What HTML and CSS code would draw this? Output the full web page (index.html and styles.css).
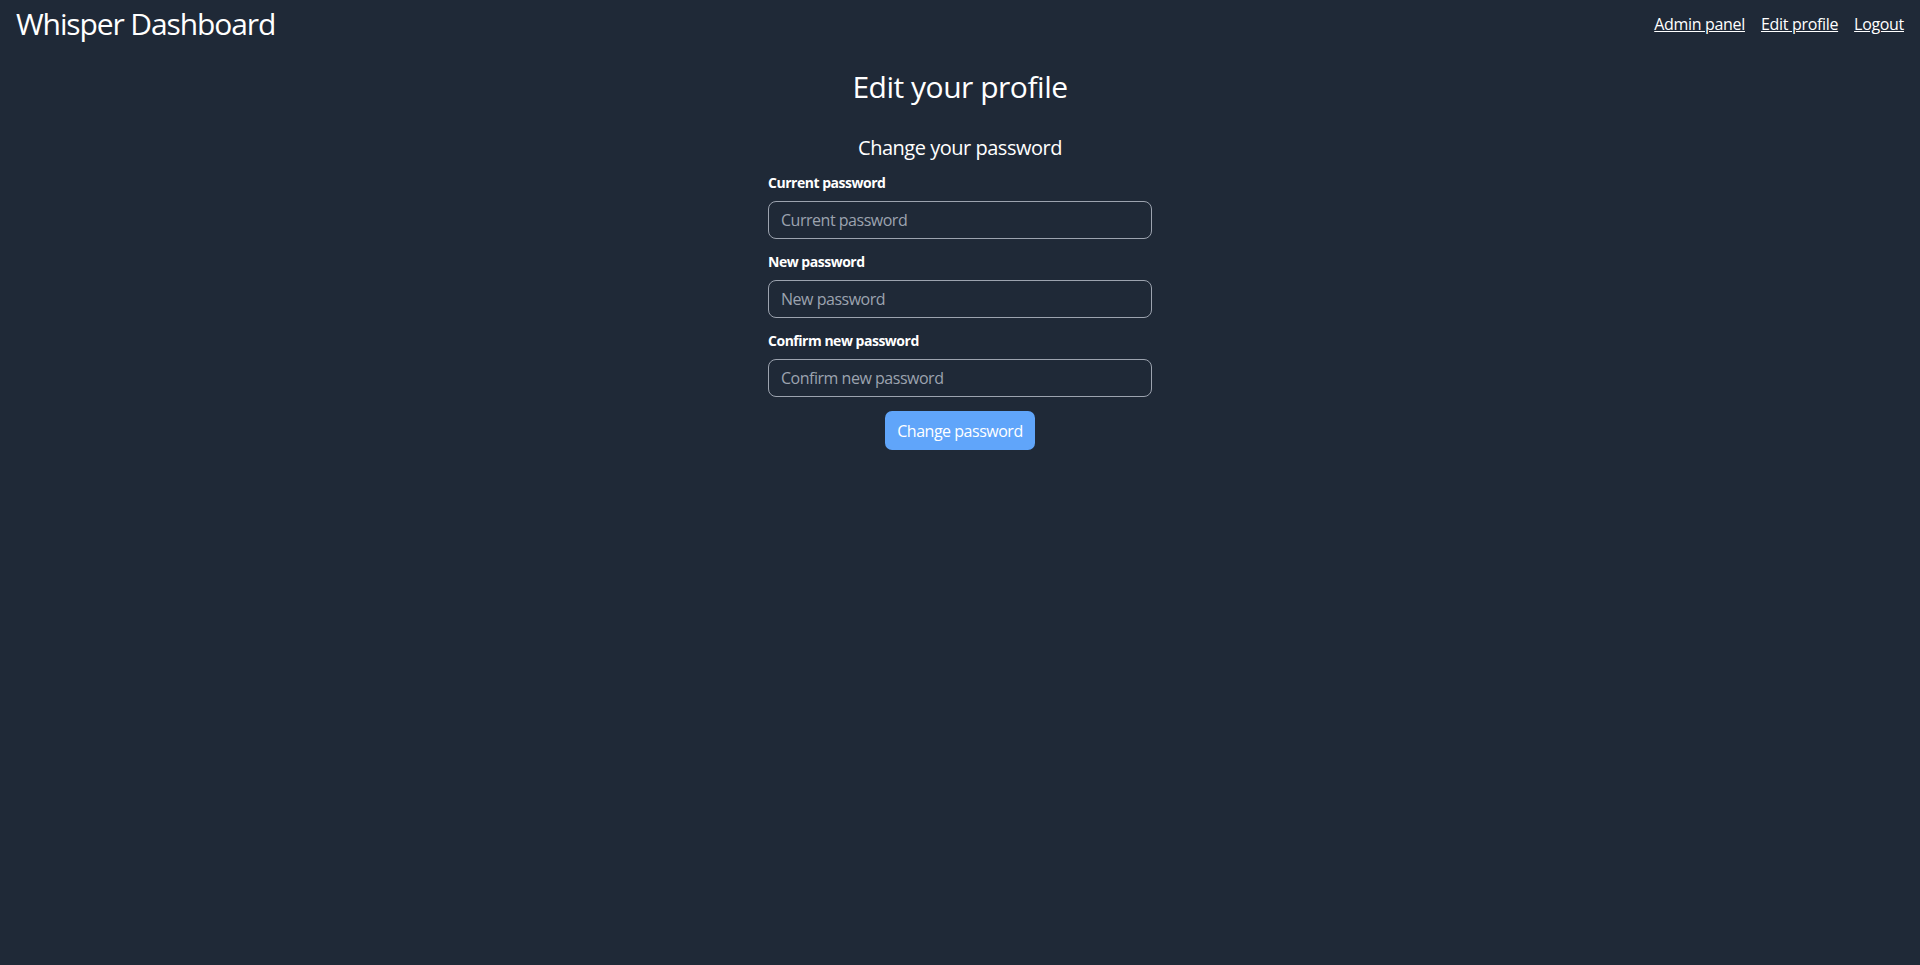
FILE: index.html
```html
<!DOCTYPE html>
<html lang="en">
<head>
<meta charset="utf-8">
<title>Whisper Dashboard</title>
<link rel="stylesheet" href="styles.css">
</head>
<body>
<header class="topbar">
  <h1 class="brand">Whisper Dashboard</h1>
  <nav class="nav">
    <a href="#">Admin panel</a>
    <a href="#">Edit profile</a>
    <a href="#">Logout</a>
  </nav>
</header>
<main class="content">
  <h2 class="page-title">Edit your profile</h2>
  <h3 class="section-title">Change your password</h3>
  <form class="form">
    <label class="label" for="cur">Current password</label>
    <input class="input" id="cur" type="password" placeholder="Current password">
    <label class="label" for="new">New password</label>
    <input class="input" id="new" type="password" placeholder="New password">
    <label class="label" for="conf">Confirm new password</label>
    <input class="input" id="conf" type="password" placeholder="Confirm new password">
    <button class="btn" type="button">Change password</button>
  </form>
</main>
</body>
</html>
```
FILE: styles.css
```css
* { box-sizing: border-box; }
html, body { margin: 0; padding: 0; }
body {
  background: #1f2937;
  color: #ffffff;
  font-family: "Open Sans", "Noto Sans", Arial, sans-serif;
  letter-spacing: -0.03em;
  min-height: 965px;
}
.topbar {
  display: flex;
  justify-content: space-between;
  align-items: center;
  padding: 2px 16px 0 16px;
}
.brand {
  margin: 0;
  font-size: 30px;
  line-height: 44px;
  font-weight: 400;
  letter-spacing: -0.037em;
}
.nav {
  display: flex;
  gap: 16px;
  font-size: 16px;
  letter-spacing: -0.02em;
}
.nav a { color: #fff; text-decoration: underline; }
.content {
  display: flex;
  flex-direction: column;
  align-items: center;
}
.page-title {
  margin: 23px 0 0 0;
  font-size: 30px;
  line-height: 36px;
  font-weight: 400;
}
.section-title {
  margin: 29px 0 0 0;
  font-size: 20px;
  line-height: 28px;
  font-weight: 400;
}
.form {
  width: 384px;
  display: flex;
  flex-direction: column;
  margin-top: 11px;
}
.label {
  font-size: 14px;
  line-height: 20px;
  font-weight: 700;
  margin-bottom: 8px;
}
.input {
  height: 38px;
  border: 1px solid #9ca3af;
  border-radius: 8px;
  background: transparent;
  color: #fff;
  font-family: inherit;
  letter-spacing: inherit;
  font-size: 16px;
  padding: 0 12px;
  margin-bottom: 13px;
}
.input::placeholder { color: #9ca3af; }
.input:last-of-type { margin-bottom: 12px; }
.btn {
  align-self: center;
  height: 39px;
  margin-top: 2px;
  padding: 0 12px;
  border: none;
  border-radius: 7px;
  background: #60a5fa;
  color: #fff;
  font-family: inherit;
  letter-spacing: inherit;
  font-size: 16px;
}
```
